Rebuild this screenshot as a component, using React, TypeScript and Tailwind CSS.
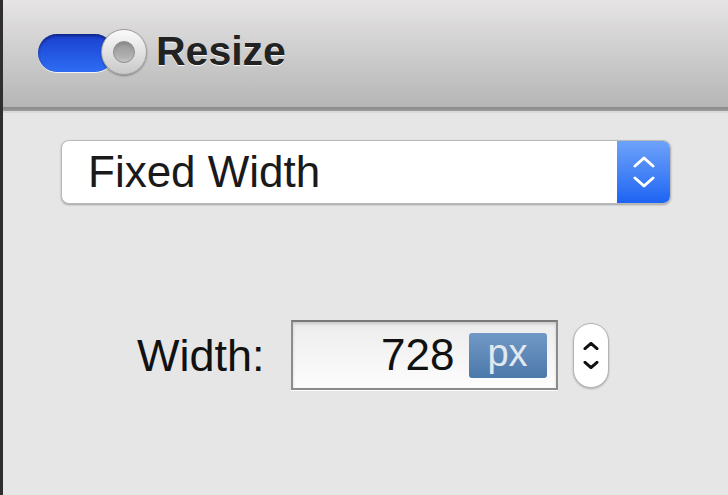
const Chevron = ({ dir, className, stroke = 3 }: { dir: 'up' | 'down'; className?: string; stroke?: number }) => (
  <svg viewBox="0 0 24 12" className={className} fill="none" stroke="currentColor" strokeWidth={stroke} strokeLinecap="round" strokeLinejoin="round">
    {dir === 'up' ? <polyline points="3,10 12,2 21,10" /> : <polyline points="3,2 12,10 21,2" />}
  </svg>
);

const Toggle = () => (
  <div className="relative w-[109px] h-[46px]">
    {/* track */}
    <div className="absolute left-0 top-[5px] w-[76px] h-[38px] rounded-full bg-gradient-to-b from-[#1b3fcf] to-[#2f6cf4] shadow-[inset_0_2px_3px_rgba(0,0,30,0.45),0_1px_0_rgba(255,255,255,0.8)]" />
    {/* knob */}
    <div className="absolute right-0 top-0 w-[46px] h-[46px] rounded-full bg-gradient-to-b from-[#fbfbfb] to-[#c9c9c9] border border-[#9d9d9d] shadow-[0_1px_2px_rgba(0,0,0,0.35)] flex items-center justify-center">
      <div className="w-[22px] h-[22px] rounded-full bg-gradient-to-b from-[#8a8a8a] to-[#c4c4c4] border border-[#8c8c8c] flex items-center justify-center">
        <div className="w-[14px] h-[14px] rounded-full bg-gradient-to-b from-[#9c9c9c] to-[#b4b4b4]" />
      </div>
    </div>
  </div>
);

export default function App() {
  return (
    <div className="w-[728px] h-[495px] flex bg-[#e6e6e6] overflow-hidden" style={{ fontFamily: '"Liberation Sans", Arial, sans-serif' }}>
      <div className="w-[3px] shrink-0 bg-[#2f2f2f]" />
      <div className="flex-1 flex flex-col">
        {/* header */}
        <div className="h-[107px] shrink-0 flex items-center pl-[35px] pb-[4px] bg-gradient-to-b from-[#e6e4e5] to-[#b6b6b6]">
          <Toggle />
          <span className="ml-[9px] text-[41px] font-bold text-[#222] leading-none [text-shadow:0_1px_0_rgba(255,255,255,0.85)]">
            Resize
          </span>
        </div>
        <div className="h-[4px] shrink-0 bg-gradient-to-b from-[#8a8a8a] to-[#9b9b9b]" />
        <div className="h-[2px] shrink-0 bg-[#d9d9d9]" />

        {/* mode dropdown */}
        <div className="mt-[27px] ml-[58px] w-[610px] h-[64px] flex rounded-[8px] border border-[#b9b9b9] bg-white shadow-[0_1px_2px_rgba(0,0,0,0.3)] overflow-hidden">
          <div className="flex-1 flex items-center pl-[26px] text-[44px] text-[#1a1a1a]">Fixed Width</div>
          <div className="w-[53px] flex flex-col items-center justify-center gap-[8px] bg-gradient-to-b from-[#6ea2f9] to-[#1c63f2] text-white">
            <Chevron dir="up" className="w-[24px] h-[12px]" />
            <Chevron dir="down" className="w-[24px] h-[12px]" />
          </div>
        </div>

        {/* width row */}
        <div className="mt-[116px] ml-[134px] flex items-center">
          <span className="text-[45px] text-[#111] leading-none">Width:</span>
          <div className="ml-[26px] w-[267px] h-[70px] border-2 border-[#8c8c8c] border-t-[#7a7a7a] bg-gradient-to-b from-[#ececec] to-[#fdfdfd] shadow-[inset_0_2px_3px_rgba(0,0,0,0.15),0_1px_0_rgba(255,255,255,0.9)] flex items-center justify-end pr-[9px]">
            <span className="text-[44px] text-[#111] leading-none">728</span>
            <div className="ml-[14px] w-[78px] h-[45px] rounded-[3px] bg-gradient-to-b from-[#7299c6] to-[#4b78aa] flex items-center justify-center text-[38px] leading-none text-[#e2e8ef] pb-[4px]">
              px
            </div>
          </div>
          <div className="ml-[15px] w-[36px] h-[65px] rounded-full border border-[#b3b3b3] bg-white shadow-[0_1px_2px_rgba(0,0,0,0.25)] flex flex-col items-center justify-center gap-[11px] text-[#111]">
            <Chevron dir="up" className="w-[16px] h-[8px]" stroke={4.5} />
            <Chevron dir="down" className="w-[16px] h-[8px]" stroke={4.5} />
          </div>
        </div>
      </div>
    </div>
  );
}
